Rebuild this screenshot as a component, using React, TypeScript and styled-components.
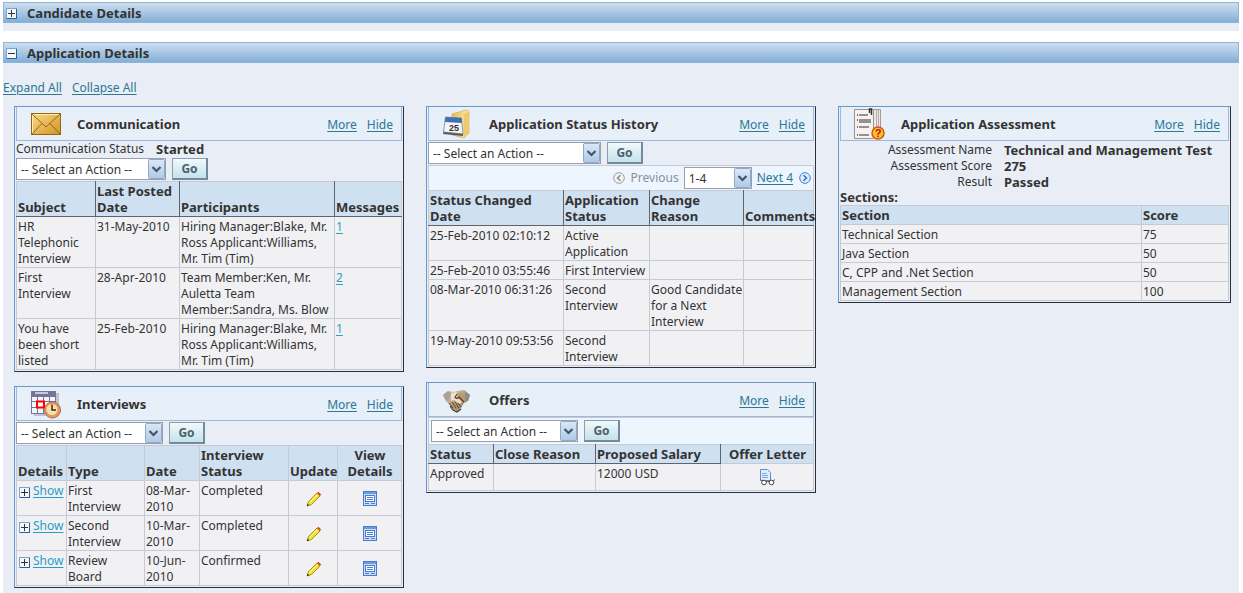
import React from "react";
import styled, { createGlobalStyle, css } from "styled-components";

const GlobalStyle = createGlobalStyle`
  * { box-sizing: border-box; }
  body {
    margin: 0;
    background: #fff;
    color: #333;
    font: 12px/16px "Noto Sans", "Open Sans", sans-serif;
  }
`;

const Page = styled.div`
  min-height: 100vh;
  display: flex;
  flex-direction: column;
  padding: 2px 4px 0 3px;
`;

const Section = styled.section<{ $fill?: boolean }>`
  background: #e9eef6;
  ${(p) => (p.$fill ? "flex: 1; padding-bottom: 5px;" : "padding-bottom: 8px; margin-bottom: 11px;")}
`;

const SectionBar = styled.header`
  display: flex;
  align-items: center;
  gap: 10px;
  height: 21px;
  padding: 0 2px;
  border: 1px solid #8fb4d9;
  background: linear-gradient(#cfdff0, #a9c7e3 50%, #82afd8);
`;

const SectionTitle = styled.h2`
  margin: 0;
  font-size: 13px;
  line-height: 18px;
`;

const Toggle = styled.button`
  display: block;
  flex: none;
  width: 11px;
  height: 13px;
  margin: 0;
  padding: 2px 0 0;
  border: 0;
  background: none;
  svg { display: block; }
`;

const Link = styled.a<{ $light?: boolean }>`
  color: ${(p) => (p.$light ? "#2a9cc8" : "#2b7895")};
  text-decoration: underline;
  text-underline-offset: 2px;
`;

const TreeLinks = styled.nav`
  display: flex;
  gap: 10px;
  padding: 17px 0 10px;
`;

const Columns = styled.main`
  display: grid;
  grid-template-columns: minmax(0, 390fr) minmax(0, 390fr) minmax(0, 393fr);
  gap: 22px;
  align-items: start;
  padding: 0 8px 0 11px;
`;

const Column = styled.div`
  display: grid;
  grid-template-columns: minmax(0, 1fr);
  gap: 14px;
`;

const Card = styled.article`
  padding: 0 1px 1px;
  border: 1px solid;
  border-color: #6699cc #2b2f36 #2b2f36 #6699cc;
`;

const CardHeader = styled.header`
  display: flex;
  align-items: center;
  height: 34px;
  padding: 0 8px 0 13px;
  border: 1px solid #9fb9d9;
  border-top: 0;
  background: #e7eff8;
`;

const CardIcon = styled.span`
  flex: none;
  width: 36px;
  height: 32px;
  svg { display: block; }
`;

const CardTitle = styled.h3`
  flex: 1;
  margin: 0 0 0 11px;
  font-size: 13px;
  line-height: 16px;
`;

const CardLinks = styled.span`
  display: flex;
  gap: 10px;
  padding-top: 2px;
`;

const ActionRow = styled.form<{ $tinted?: boolean }>`
  display: flex;
  gap: 6px;
  padding: 1px 0;
  ${(p) =>
    p.$tinted &&
    css`
      padding: 2px;
      border: 1px solid #c5cad5;
      border-bottom: 0;
      background: #edf5ff;
    `}
`;

const SelectBox = styled.span<{ $width: number }>`
  position: relative;
  width: ${(p) => p.$width}px;
  height: 22px;
  svg {
    position: absolute;
    top: 1px;
    right: 1px;
    pointer-events: none;
  }
`;

const Select = styled.select`
  appearance: none;
  width: 100%;
  height: 22px;
  margin: 0;
  padding: 2px 18px 0 4px;
  border: 1px solid #9aa0aa;
  border-radius: 0;
  background: #fff;
  color: #333;
  font: inherit;
`;

const GoButton = styled.button`
  width: 36px;
  height: 22px;
  padding: 0;
  border: 1px solid #8d9db0;
  border-right: 2px solid #76889c;
  border-bottom: 2px solid #76889c;
  background: linear-gradient(#f1f9fb, #c3e3e9);
  color: #4c5f72;
  font: bold 12px/16px "Noto Sans", sans-serif;
`;

const StatusLine = styled.dl`
  display: flex;
  gap: 12px;
  margin: 0;
  dt, dd { margin: 0; }
  dd { font-size: 13px; font-weight: bold; }
`;

const Facts = styled.dl`
  display: grid;
  grid-template-columns: 152px 1fr;
  column-gap: 12px;
  margin: 0;
  padding-top: 1px;
  dt, dd { margin: 0; }
  dt { text-align: right; }
  dd { font-size: 13px; font-weight: bold; }
`;

const Subheading = styled.h4`
  margin: 0;
  font-size: 13px;
  line-height: 15px;
`;

const Pager = styled.nav`
  display: flex;
  align-items: center;
  justify-content: flex-end;
  gap: 5px;
  height: 25px;
  padding: 0 2px;
  border: 1px solid #c5cad5;
  border-bottom: 0;
  background: #edf5ff;
  svg { display: block; }
`;

const PagerStep = styled.span`
  display: flex;
  align-items: center;
  gap: 6px;
  color: #8a8f98;
`;

const Table = styled.table`
  width: 100%;
  table-layout: fixed;
  border-collapse: collapse;
`;

const Th = styled.th<{ $line?: string; $center?: boolean }>`
  padding: 1px 0 1px 1px;
  border: 1px solid ${(p) => p.$line ?? "#c5cad5"};
  border-top-color: #c5cad5;
  background: #cfe0f0;
  font-size: 13px;
  line-height: 16px;
  text-align: ${(p) => (p.$center ? "center" : "left")};
  vertical-align: bottom;
  &:first-child { border-left-color: #c5cad5; }
  &:last-child { border-right-color: #c5cad5; }
`;

const Td = styled.td<{ $center?: boolean }>`
  padding: 2px 0 0 1px;
  border: 1px solid #c5cad5;
  background: #f1f1f4;
  text-align: ${(p) => (p.$center ? "center" : "left")};
  vertical-align: ${(p) => (p.$center ? "middle" : "top")};
`;

const IconButton = styled.button`
  display: block;
  margin: 0 auto;
  padding: 3px 0 4px;
  border: 0;
  background: none;
  svg { display: block; }
`;

const ShowCell = styled.span`
  display: flex;
  align-items: center;
  gap: 3px;
  padding-left: 1px;
`;

const DARK = "#5f646c";

const PlusMinus = ({ open }: { open?: boolean }) => (
  <svg width="11" height="11" viewBox="0 0 11 11" shapeRendering="crispEdges">
    <rect x="0.5" y="0.5" width="10" height="10" fill="#f4f9fe" stroke="#7ba3cf" />
    <path d="M10.5 1v9.5H1" fill="none" stroke="#2a5f9e" />
    <path d={open ? "M2 5.5h7" : "M2 5.5h7M5.5 2v7"} stroke="#333" />
  </svg>
);

const ArrowTile = () => (
  <svg width="17" height="20" viewBox="0 0 17 20">
    <defs>
      <linearGradient id="tile" x1="0" y1="0" x2="0" y2="1">
        <stop offset="0" stopColor="#dbe8f8" />
        <stop offset="1" stopColor="#aec9e8" />
      </linearGradient>
    </defs>
    <rect x="0.5" y="0.5" width="16" height="19" rx="1" fill="url(#tile)" stroke="#8fa9c6" />
    <path d="M4.500 8l4 4 4-4" fill="none" stroke="#44546a" strokeWidth="2.200" />
  </svg>
);

const Envelope = () => (
  <svg width="36" height="32" viewBox="0 0 36 32">
    <defs>
      <linearGradient id="env" x1="0" y1="0" x2="1" y2="1">
        <stop offset="0" stopColor="#ffd986" />
        <stop offset="1" stopColor="#cf9428" />
      </linearGradient>
    </defs>
    <rect x="1.500" y="5.500" width="29" height="21" fill="url(#env)" stroke="#94640f" />
    <path d="M2.500 25.500v-19h27" fill="none" stroke="#fff0bd" />
    <path d="M2 6l14 13L30 6M2 26l10-10.500M30 26L20 15.500" fill="none" stroke="#94640f" />
  </svg>
);

const CalendarClock = () => (
  <svg width="36" height="32" viewBox="0 0 36 32">
    <path d="M4 5h25v23H4z" fill="#aeb0c4" opacity=".7" />
    <rect x="1" y="3" width="25" height="23" fill="#75759b" />
    <path d="M5 5h13" stroke="#c9c9de" strokeWidth="2" />
    <path d="M2 9h5v4H2zM8 9h5v4H8zM14 9h5v4h-5zM20 9h5v4h-5zM2 14h5v5H2zM8 14h5v5H8zM14 14h5v5h-5zM20 14h5v5h-5zM2 20h5v5H2zM8 20h5v5H8zM14 20h5v5h-5z" fill="#f4f4fa" />
    <rect x="7" y="13.500" width="7" height="6" fill="#fff" stroke="#f00" strokeWidth="2" />
    <circle cx="22.500" cy="22" r="8" fill="#e39a62" stroke="#b8694a" />
    <circle cx="22" cy="21.500" r="5.500" fill="#fae0a8" />
    <path d="M22 16.500v5.500h4" fill="none" stroke="#3a2a20" strokeWidth="1.500" />
  </svg>
);

const FolderCalendar = () => (
  <svg width="36" height="32" viewBox="0 0 36 32">
    <defs>
      <linearGradient id="fold" x1="0" y1="0" x2="1" y2="0">
        <stop offset="0" stopColor="#e6bb55" />
        <stop offset="1" stopColor="#fde9a5" />
      </linearGradient>
    </defs>
    <path d="M10 6l14-4 3 1v22l-5 5-12-3z" fill="url(#fold)" stroke="#d0a548" strokeWidth=".6" />
    <path d="M21 7l6-4v22l-6 5z" fill="#efc96b" />
    <path d="M21 7v22" stroke="#fdf0c0" strokeWidth=".8" />
    <path d="M3.500 9l16 1 1.500 16-19.500-2z" fill="#f4f5f7" stroke="#777d88" strokeWidth=".8" />
    <path d="M3.500 9l16 1 .5 5-17-1z" fill="#3f70b4" />
    <path d="M1.500 24l19.500 2v2L1 26z" fill="#555b66" />
    <text x="7" y="23" fontFamily="Liberation Sans" fontSize="9" fontWeight="bold" fill="#333">25</text>
  </svg>
);

const Handshake = () => (
  <svg width="36" height="32" viewBox="0 0 36 32">
    <defs>
      <linearGradient id="hand" x1="0" y1="0" x2="1" y2="1">
        <stop offset="0" stopColor="#ddcfb8" />
        <stop offset="1" stopColor="#8d7150" />
      </linearGradient>
    </defs>
    <path d="M1 11l5-4 6 1 4-1 6-1 6 5-2 6-4 2-3 5-4 3-4-2-4-5-4-4z" fill="url(#hand)" />
    <path d="M1 11l5-4 3 2-3 8-3-2z" fill="#a8a29a" />
    <path d="M23 7l5 4-2 6-3-2z" fill="#958c80" />
    <path d="M9 9l5-1 3 2-2 3 5 5-2 2-6-4-3 1z" fill="#efe1c9" />
    <path d="M15 9.500l4-1 4 7-2 3-5-5z" fill="#b99a73" />
    <path d="M15 10l-2 3.500 2 1 2-1.500 5 5" fill="none" stroke="#4c3a28" strokeWidth="1.100" />
    <path d="M7 19l4 5M10 18l4 6M13 18l4 6M16 19l3 4" stroke="#5c4730" />
    <path d="M8 22l3 4 4 2 4-3" fill="none" stroke="#3f3428" strokeWidth="1.200" />
  </svg>
);

const Clipboard = () => (
  <svg width="36" height="32" viewBox="0 0 36 32">
    <path d="M8 1.500h18.500v27H8z" fill="#ece8e6" stroke="#a39b98" />
    <path d="M24.500 2v26M22.500 2v26" stroke="#b3aba8" />
    <path d="M.5 1.500h19v29H.5z" fill="#f5f2f1" stroke="#9b918e" />
    <path d="M5 7h9M5 12h12M5 14h12M5 19h10M5 27h10" stroke="#77716e" strokeWidth="1.300" />
    <path d="M3 7h1M3 12h1M3 19h1M3 27h1" stroke="#444" strokeWidth="1.500" />
    <path d="M15.500 5V1h2v6" fill="none" stroke="#333" strokeWidth="1.500" />
    <circle cx="24" cy="25" r="6" fill="#ffc229" stroke="#d94e17" strokeWidth="1.500" />
    <text x="24" y="29" textAnchor="middle" fontFamily="Liberation Sans" fontSize="11" fontWeight="bold" fill="#b3170a">?</text>
  </svg>
);

const Pencil = () => (
  <svg width="16" height="16" viewBox="0 0 16 16">
    <path d="M1 15l1.500-4.500L11 2l3 3-8.500 8.500z" fill="#f7e02a" stroke="#8a7a10" strokeWidth=".8" />
    <path d="M3.500 11.500l8-8" stroke="#fffbb0" />
    <path d="M11 2l1.500-1.200L15.200 3.500 14 5z" fill="#e8432b" />
    <path d="M1 15l.7-2.200 1.500 1.500z" fill="#222" />
  </svg>
);

const DetailIcon = () => (
  <svg width="14" height="15" viewBox="0 0 14 15" shapeRendering="crispEdges">
    <rect x="0.5" y="0.5" width="13" height="14" fill="#c9dcf8" stroke="#4a7bd0" />
    <path d="M1 2h12" stroke="#6f9be6" strokeWidth="2" />
    <rect x="2.500" y="4.500" width="9" height="6" fill="#fff" stroke="#4a7bd0" />
    <path d="M4 6.500h6M4 8.500h6M2 12.500h4M8 12.500h4" stroke="#4a7bd0" />
  </svg>
);

const LetterIcon = () => (
  <svg width="17" height="17" viewBox="0 0 17 17">
    <path d="M1.500 .5h7l3 3v8h-10z" fill="#e3eefc" stroke="#5b8bd6" />
    <path d="M3 4.500h5M3 6.500h6M3 8.500h6" stroke="#7ba5e4" />
    <circle cx="5" cy="13.500" r="2.300" fill="#fff" stroke="#444" />
    <circle cx="12.500" cy="13.500" r="2.300" fill="#fff" stroke="#444" />
    <path d="M7 13q1.700-1.500 3.300 0M3 12L2 10.500M14.500 12l1-1.500" fill="none" stroke="#444" />
  </svg>
);

const StepCircle = ({ next }: { next?: boolean }) => (
  <svg width="12" height="12" viewBox="0 0 12 12">
    <circle cx="6" cy="6" r="5.300" fill={next ? "#e2eeff" : "#f4f4f4"} stroke={next ? "#3c7fd6" : "#999"} />
    <path d={next ? "M4.500 3.200L7.500 6l-3 2.800" : "M7.500 3.200L4.500 6l3 2.800"} fill="none" stroke={next ? "#2a6cc8" : "#888"} strokeWidth="1.500" />
  </svg>
);

const Picker = ({ label, width, value }: { label: string; width: number; value: string }) => (
  <SelectBox $width={width}>
    <Select aria-label={label}>
      <option>{value}</option>
    </Select>
    <ArrowTile />
  </SelectBox>
);

const Actions = ({ name, width, tinted }: { name: string; width: number; tinted?: boolean }) => (
  <ActionRow $tinted={tinted} onSubmit={(e) => e.preventDefault()}>
    <Picker label={`${name} action`} width={width} value="-- Select an Action --" />
    <GoButton type="submit">Go</GoButton>
  </ActionRow>
);

const Panel = ({ title, icon, children }: { title: string; icon: React.ReactNode; children: React.ReactNode }) => (
  <Card>
    <CardHeader>
      <CardIcon>{icon}</CardIcon>
      <CardTitle>{title}</CardTitle>
      <CardLinks>
        <Link href="#more">More</Link>
        <Link href="#hide">Hide</Link>
      </CardLinks>
    </CardHeader>
    {children}
  </Card>
);

type HeadCell = { text: string; width: number; center?: boolean; line?: string };

const DataTable = ({ head, rows }: { head: HeadCell[]; rows: React.ReactNode[][] }) => (
  <Table>
    <colgroup>
      {head.map((h) => (
        <col key={h.text} width={h.width} />
      ))}
    </colgroup>
    <thead>
      <tr>
        {head.map((h) => (
          <Th key={h.text} scope="col" $center={h.center} $line={h.line}>
            {h.text}
          </Th>
        ))}
      </tr>
    </thead>
    <tbody>
      {rows.map((row, i) => (
        <tr key={i}>
          {row.map((cell, j) => (
            <Td key={j} $center={head[j].center}>
              {cell}
            </Td>
          ))}
        </tr>
      ))}
    </tbody>
  </Table>
);

const count = (n: number) => (
  <Link $light href="#messages">
    {n}
  </Link>
);

const show = (
  <ShowCell>
    <Toggle type="button" aria-label="Expand row">
      <PlusMinus />
    </Toggle>
    <Link $light href="#show">
      Show
    </Link>
  </ShowCell>
);

const update = (
  <IconButton type="button" aria-label="Update">
    <Pencil />
  </IconButton>
);

const view = (
  <IconButton type="button" aria-label="View details">
    <DetailIcon />
  </IconButton>
);

const letter = (
  <IconButton type="button" aria-label="Open offer letter">
    <LetterIcon />
  </IconButton>
);

export default function App() {
  return (
    <Page>
      <GlobalStyle />
      <Section>
        <SectionBar>
          <Toggle type="button" aria-label="Expand Candidate Details">
            <PlusMinus />
          </Toggle>
          <SectionTitle>Candidate Details</SectionTitle>
        </SectionBar>
      </Section>
      <Section $fill>
        <SectionBar>
          <Toggle type="button" aria-label="Collapse Application Details">
            <PlusMinus open />
          </Toggle>
          <SectionTitle>Application Details</SectionTitle>
        </SectionBar>
        <TreeLinks>
          <Link href="#expand">Expand All</Link>
          <Link href="#collapse">Collapse All</Link>
        </TreeLinks>
        <Columns>
          <Column>
            <Panel title="Communication" icon={<Envelope />}>
              <StatusLine>
                <dt>Communication Status</dt>
                <dd>Started</dd>
              </StatusLine>
              <Actions name="Communication" width={150} />
              <DataTable
                head={[
                  { text: "Subject", width: 79, line: DARK },
                  { text: "Last Posted Date", width: 84, line: DARK },
                  { text: "Participants", width: 155, line: DARK },
                  { text: "Messages", width: 67, line: DARK },
                ]}
                rows={[
                  ["HR Telephonic Interview", "31-May-2010", "Hiring Manager:Blake, Mr. Ross Applicant:Williams, Mr. Tim (Tim)", count(1)],
                  ["First Interview", "28-Apr-2010", "Team Member:Ken, Mr. Auletta Team Member:Sandra, Ms. Blow", count(2)],
                  ["You have been short listed", "25-Feb-2010", "Hiring Manager:Blake, Mr. Ross Applicant:Williams, Mr. Tim (Tim)", count(1)],
                ]}
              />
            </Panel>
            <Panel title="Interviews" icon={<CalendarClock />}>
              <Actions name="Interviews" width={147} />
              <DataTable
                head={[
                  { text: "Details", width: 50 },
                  { text: "Type", width: 78 },
                  { text: "Date", width: 55 },
                  { text: "Interview Status", width: 89 },
                  { text: "Update", width: 49, center: true },
                  { text: "View Details", width: 64, center: true },
                ]}
                rows={[
                  [show, "First Interview", "08-Mar-2010", "Completed", update, view],
                  [show, "Second Interview", "10-Mar-2010", "Completed", update, view],
                  [show, "Review Board", "10-Jun-2010", "Confirmed", update, view],
                ]}
              />
            </Panel>
          </Column>
          <Column>
            <Panel title="Application Status History" icon={<FolderCalendar />}>
              <Actions name="Status history" width={173} />
              <Pager aria-label="History pages">
                <PagerStep>
                  <StepCircle />
                  Previous
                </PagerStep>
                <Picker label="Page range" width={68} value="1-4" />
                <PagerStep>
                  <Link href="#next">Next 4</Link>
                  <StepCircle next />
                </PagerStep>
              </Pager>
              <DataTable
                head={[
                  { text: "Status Changed Date", width: 135, line: DARK },
                  { text: "Application Status", width: 86, line: DARK },
                  { text: "Change Reason", width: 94, line: DARK },
                  { text: "Comments", width: 70, line: DARK },
                ]}
                rows={[
                  ["25-Feb-2010 02:10:12", "Active Application", "", ""],
                  ["25-Feb-2010 03:55:46", "First Interview", "", ""],
                  ["08-Mar-2010 06:31:26", "Second Interview", "Good Candidate for a Next Interview", ""],
                  ["19-May-2010 09:53:56", "Second Interview", "", ""],
                ]}
              />
            </Panel>
            <Panel title="Offers" icon={<Handshake />}>
              <Actions name="Offers" width={147} tinted />
              <DataTable
                head={[
                  { text: "Status", width: 65, line: DARK },
                  { text: "Close Reason", width: 102, line: DARK },
                  { text: "Proposed Salary", width: 125, line: DARK },
                  { text: "Offer Letter", width: 93, center: true },
                ]}
                rows={[["Approved", "", "12000 USD", letter]]}
              />
            </Panel>
          </Column>
          <Column>
            <Panel title="Application Assessment" icon={<Clipboard />}>
              <Facts>
                <dt>Assessment Name</dt>
                <dd>Technical and Management Test</dd>
                <dt>Assessment Score</dt>
                <dd>275</dd>
                <dt>Result</dt>
                <dd>Passed</dd>
              </Facts>
              <Subheading>Sections:</Subheading>
              <DataTable
                head={[
                  { text: "Section", width: 301 },
                  { text: "Score", width: 87 },
                ]}
                rows={[
                  ["Technical Section", "75"],
                  ["Java Section", "50"],
                  ["C, CPP and .Net Section", "50"],
                  ["Management Section", "100"],
                ]}
              />
            </Panel>
          </Column>
        </Columns>
      </Section>
    </Page>
  );
}
